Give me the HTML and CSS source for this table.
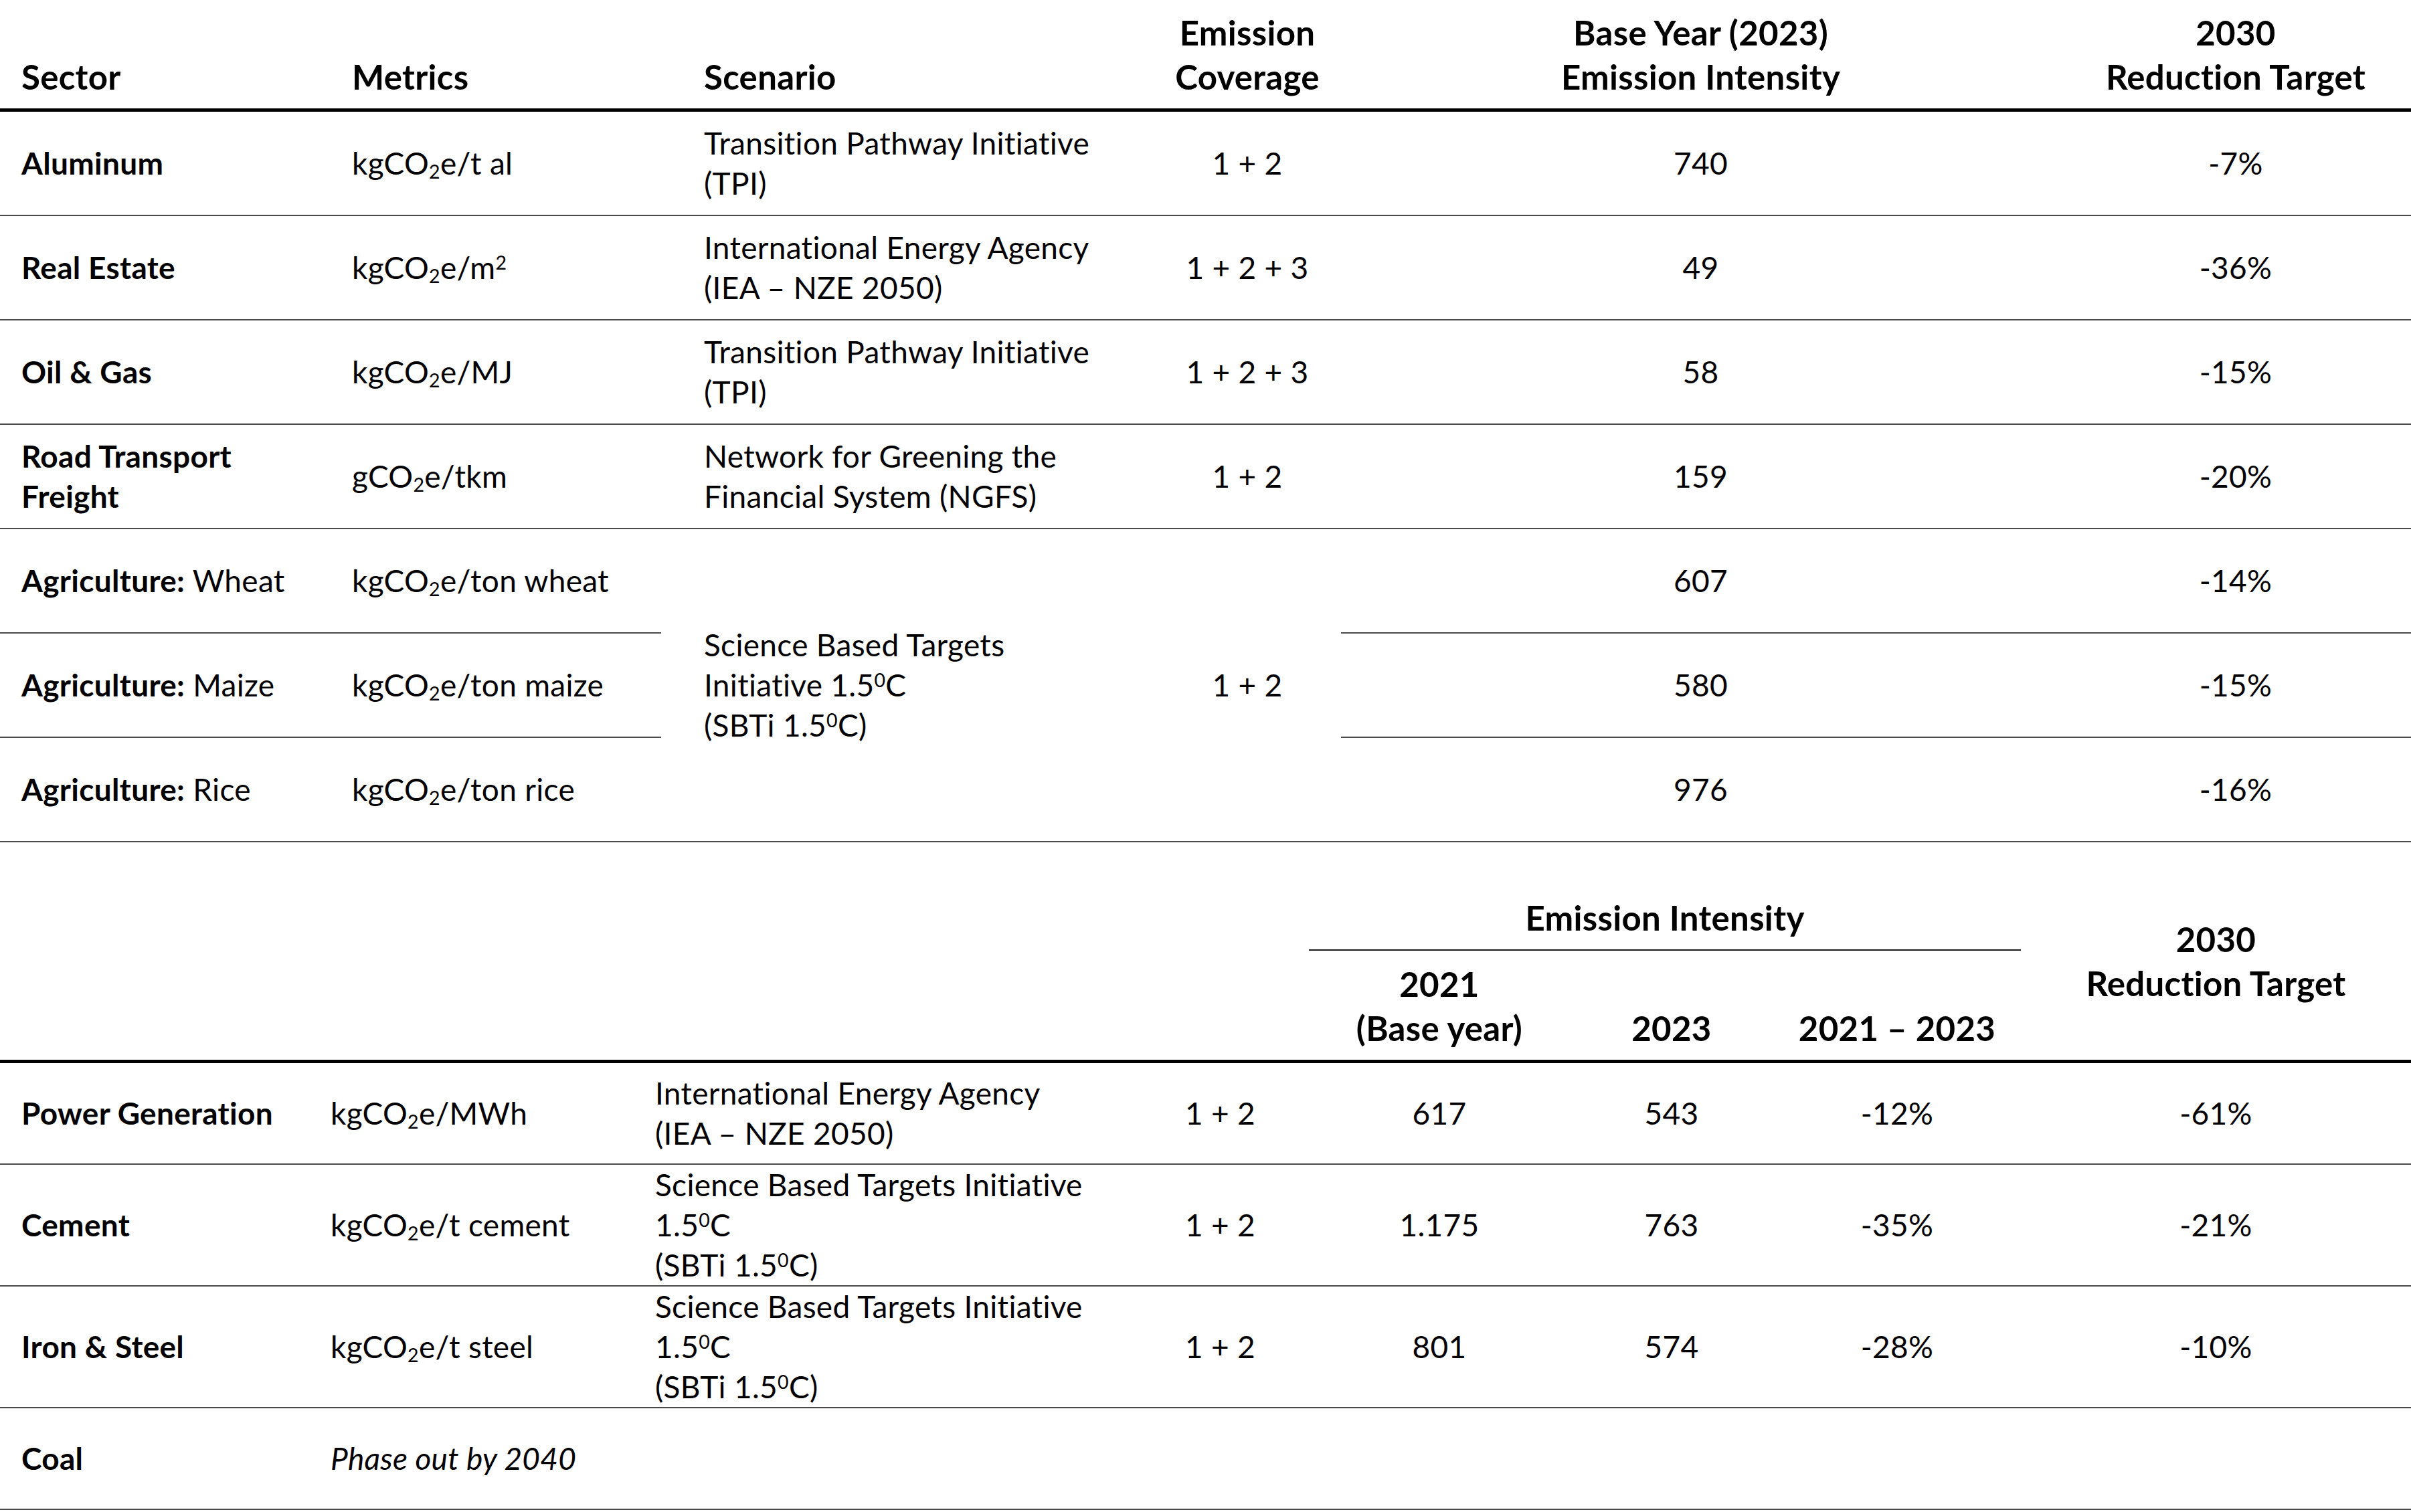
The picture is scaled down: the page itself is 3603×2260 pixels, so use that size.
FILE: index.html
```html
<!DOCTYPE html>
<html lang="en">
<head>
<meta charset="utf-8">
<title>Sector targets</title>
<link rel="stylesheet" href="styles.css">
</head>
<body>
<table class="tbl t1">
  <colgroup>
    <col class="c1a"><col class="c1b"><col class="c1c"><col class="c1d"><col class="c1e"><col class="c1f">
  </colgroup>
  <thead>
    <tr>
      <th class="left">Sector</th>
      <th class="left">Metrics</th>
      <th class="left scen">Scenario</th>
      <th>Emission<br>Coverage</th>
      <th>Base Year (2023)<br>Emission Intensity</th>
      <th>2030<br>Reduction Target</th>
    </tr>
  </thead>
  <tbody>
    <tr>
      <td class="left b">Aluminum</td>
      <td class="left">kgCO<sub>2</sub>e/t al</td>
      <td class="left scen">Transition Pathway Initiative<br>(TPI)</td>
      <td>1 + 2</td>
      <td>740</td>
      <td>-7%</td>
    </tr>
    <tr>
      <td class="left b">Real Estate</td>
      <td class="left">kgCO<sub>2</sub>e/m<sup class="sq">2</sup></td>
      <td class="left scen">International Energy Agency<br>(IEA – NZE 2050)</td>
      <td>1 + 2 + 3</td>
      <td>49</td>
      <td>-36%</td>
    </tr>
    <tr>
      <td class="left b">Oil &amp; Gas</td>
      <td class="left">kgCO<sub>2</sub>e/MJ</td>
      <td class="left scen">Transition Pathway Initiative<br>(TPI)</td>
      <td>1 + 2 + 3</td>
      <td>58</td>
      <td>-15%</td>
    </tr>
    <tr>
      <td class="left b">Road Transport<br>Freight</td>
      <td class="left">gCO<sub>2</sub>e/tkm</td>
      <td class="left scen">Network for Greening the<br>Financial System (NGFS)</td>
      <td>1 + 2</td>
      <td>159</td>
      <td>-20%</td>
    </tr>
    <tr>
      <td class="left"><b>Agriculture:</b> Wheat</td>
      <td class="left">kgCO<sub>2</sub>e/ton wheat</td>
      <td class="left scen" rowspan="3">Science Based Targets<br>Initiative 1.5<sup>0</sup>C<br>(SBTi 1.5<sup>0</sup>C)</td>
      <td rowspan="3">1 + 2</td>
      <td>607</td>
      <td>-14%</td>
    </tr>
    <tr>
      <td class="left"><b>Agriculture:</b> Maize</td>
      <td class="left">kgCO<sub>2</sub>e/ton maize</td>
      <td>580</td>
      <td>-15%</td>
    </tr>
    <tr>
      <td class="left"><b>Agriculture:</b> Rice</td>
      <td class="left">kgCO<sub>2</sub>e/ton rice</td>
      <td>976</td>
      <td>-16%</td>
    </tr>
  </tbody>
</table>

<table class="tbl t2">
  <colgroup>
    <col class="c2a"><col class="c2b"><col class="c2c"><col class="c2d"><col class="c2e"><col class="c2f"><col class="c2g"><col class="c2h">
  </colgroup>
  <thead>
    <tr class="hrA">
      <th rowspan="2" class="blank"></th>
      <th rowspan="2" class="blank"></th>
      <th rowspan="2" class="blank"></th>
      <th rowspan="2" class="blank"></th>
      <th colspan="3" class="group">Emission Intensity</th>
      <th rowspan="2" class="target">2030<br>Reduction Target</th>
    </tr>
    <tr class="hrB">
      <th>2021<br>(Base year)</th>
      <th>2023</th>
      <th>2021 – 2023</th>
    </tr>
  </thead>
  <tbody>
    <tr class="r-short">
      <td class="left b">Power Generation</td>
      <td class="left">kgCO<sub>2</sub>e/MWh</td>
      <td class="left">International Energy Agency<br>(IEA – NZE 2050)</td>
      <td>1 + 2</td>
      <td>617</td>
      <td>543</td>
      <td>-12%</td>
      <td>-61%</td>
    </tr>
    <tr class="r-tall">
      <td class="left b">Cement</td>
      <td class="left">kgCO<sub>2</sub>e/t cement</td>
      <td class="left">Science Based Targets Initiative<br>1.5<sup>0</sup>C<br>(SBTi 1.5<sup>0</sup>C)</td>
      <td>1 + 2</td>
      <td>1.175</td>
      <td>763</td>
      <td>-35%</td>
      <td>-21%</td>
    </tr>
    <tr class="r-tall">
      <td class="left b">Iron &amp; Steel</td>
      <td class="left">kgCO<sub>2</sub>e/t steel</td>
      <td class="left">Science Based Targets Initiative<br>1.5<sup>0</sup>C<br>(SBTi 1.5<sup>0</sup>C)</td>
      <td>1 + 2</td>
      <td>801</td>
      <td>574</td>
      <td>-28%</td>
      <td>-10%</td>
    </tr>
    <tr class="r-short">
      <td class="left b">Coal</td>
      <td class="left"><i>Phase out by 2040</i></td>
      <td></td>
      <td></td>
      <td></td>
      <td></td>
      <td></td>
      <td></td>
    </tr>
  </tbody>
</table>
</body>
</html>
```
FILE: styles.css
```css
html, body {
  margin: 0;
  padding: 0;
  background: #ffffff;
}

body {
  font-family: "Lato", "Open Sans", sans-serif;
  font-size: 46px;
  line-height: 60px;
  letter-spacing: 0.3px;
  color: #000000;
  width: 3603px;
}

.tbl {
  width: 3603px;
  table-layout: fixed;
  border-collapse: separate;
  border-spacing: 0;
}

.tbl th,
.tbl td {
  box-sizing: border-box;
  white-space: nowrap;
  text-align: center;
  padding: 0;
}

.tbl th {
  font-weight: 700;
  font-size: 51px;
  line-height: 66px;
  vertical-align: bottom;
}

.tbl td {
  vertical-align: middle;
  font-weight: 400;
  border-bottom: 2px solid #4a4a4a;
}

.tbl .left {
  text-align: left;
  padding-left: 32px;
}

.tbl .scen {
  padding-left: 64px;
}

.tbl td.b,
.tbl b {
  font-weight: 700;
}

sub {
  font-size: 0.62em;
  line-height: 0;
  vertical-align: -0.22em;
}

sup {
  font-size: 0.62em;
  line-height: 0;
  vertical-align: 0.5em;
}

/* table 1 */
.c1a { width: 494px; }
.c1b { width: 494px; }
.c1c { width: 736px; }
.c1d { width: 280px; }
.c1e { width: 1075px; }
.c1f { width: 524px; }

.t1 thead th {
  padding-top: 16px;
  padding-bottom: 14px;
  border-bottom: 5px solid #000000;
}

.t1 thead th.left {
  padding-left: 32px;
}

.t1 thead th.scen {
  padding-left: 64px;
}

.t1 tbody td {
  height: 156px;
}

/* table 2 */
.t2 {
  margin-top: 80px;
}

.c2a { width: 462px; }
.c2b { width: 485px; }
.c2c { width: 744px; }
.c2d { width: 265px; }
.c2e { width: 390px; }
.c2f { width: 304px; }
.c2g { width: 370px; }
.c2h { width: 583px; }

.t2 .hrA th.group {
  padding-bottom: 14px;
  border-bottom: 2px solid #1a1a1a;
}

.t2 .hrA th.blank,
.t2 .hrA th.target {
  border-bottom: 5px solid #000000;
}

.t2 .hrA th.target {
  vertical-align: middle;
  padding-bottom: 50px;
}

.t2 .hrB th {
  padding-top: 17px;
  padding-bottom: 14px;
  border-bottom: 5px solid #000000;
}

.t2 tbody tr.r-short td {
  height: 152px;
}

.t2 tbody tr.r-tall td {
  height: 182px;
}
```
